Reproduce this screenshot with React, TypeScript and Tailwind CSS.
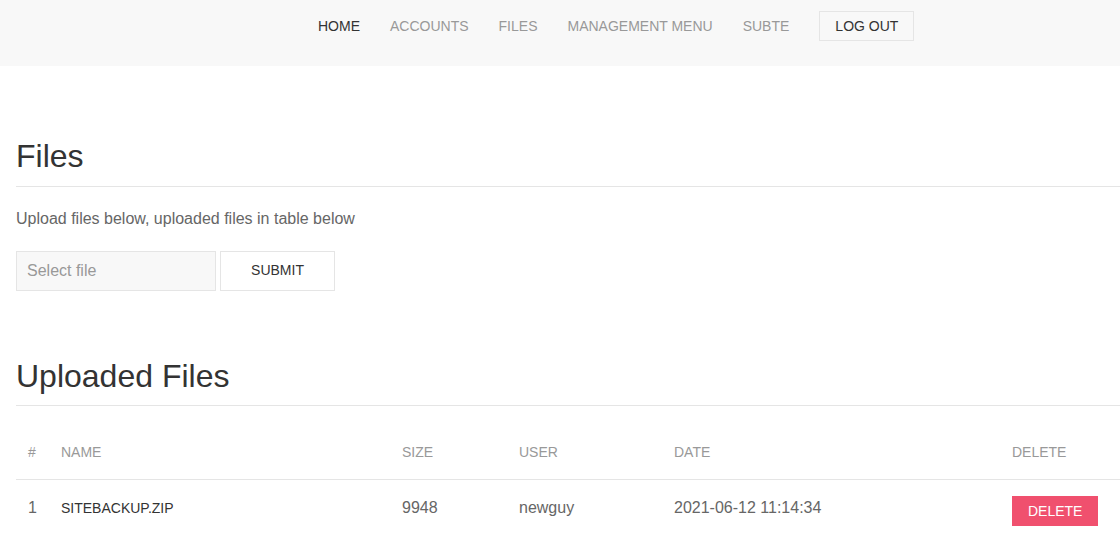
const NAV = ["ACCOUNTS", "FILES", "MANAGEMENT MENU", "SUBTE"];

const FILES = [
  { id: 1, name: "sitebackup.zip", size: "9948", user: "newguy", date: "2021-06-12 11:14:34" },
];

export default function App() {
  return (
    <div className="min-h-screen bg-white font-['Liberation_Sans',Arial,sans-serif] text-[16px] leading-[1.5] text-[#666]">
      {/* Navbar */}
      <nav className="h-[66px] bg-[#f8f8f8]">
        <div className="flex h-[52px] items-center pl-[318px] text-[14px] uppercase">
          <a className="mr-[30px] text-[#333]">Home</a>
          {NAV.map((item) => (
            <a key={item} className="mr-[30px] text-[#999]">
              {item}
            </a>
          ))}
          <button className="box-border h-[30px] border border-[#e5e5e5] bg-transparent px-[15px] text-[14px] uppercase leading-[28px] text-[#333]">
            Log out
          </button>
        </div>
      </nav>

      <main className="pl-4 pt-[70px]">
        {/* Upload */}
        <h2 className="border-b border-[#e5e5e5] pb-[8px] text-[32px] font-normal leading-[1.3] text-[#333]">
          Files
        </h2>
        <p className="mt-5">Upload files below, uploaded files in table below</p>
        <div className="mt-5 flex gap-1">
          <div className="box-border flex h-10 w-[200px] items-center border border-[#e5e5e5] bg-[#f8f8f8] px-[10px] text-[#999]">
            Select file
          </div>
          <button className="box-border h-10 w-[115px] border border-[#e5e5e5] bg-white text-[14px] uppercase text-[#333]">
            Submit
          </button>
        </div>

        {/* Table */}
        <h2 className="mt-[65px] border-b border-[#e5e5e5] pb-[8px] text-[32px] font-normal leading-[1.3] text-[#333]">
          Uploaded Files
        </h2>
        <table className="mt-5 w-full border-collapse">
          <thead>
            <tr className="border-b border-[#e5e5e5] text-left text-[14px] uppercase text-[#999]">
              <th className="w-[33px] px-3 py-4 align-bottom font-normal">#</th>
              <th className="w-[341px] px-3 py-4 align-bottom font-normal">Name</th>
              <th className="w-[117px] px-3 py-4 align-bottom font-normal">Size</th>
              <th className="w-[155px] px-3 py-4 align-bottom font-normal">User</th>
              <th className="w-[338px] px-3 py-4 align-bottom font-normal">Date</th>
              <th className="px-3 py-4 align-bottom font-normal">Delete</th>
            </tr>
          </thead>
          <tbody>
            {FILES.map((f) => (
              <tr key={f.id} className="text-left">
                <td className="px-3 py-4 align-top">{f.id}</td>
                <td className="px-3 py-4 align-top">
                  <span className="text-[14px] uppercase text-[#333]">{f.name}</span>
                </td>
                <td className="px-3 py-4 align-top">{f.size}</td>
                <td className="px-3 py-4 align-top">{f.user}</td>
                <td className="px-3 py-4 align-top">{f.date}</td>
                <td className="px-3 py-4 align-top">
                  <button className="h-[30px] bg-[#f0506e] px-4 text-[14px] uppercase leading-[30px] text-white">
                    Delete
                  </button>
                </td>
              </tr>
            ))}
          </tbody>
        </table>
      </main>
    </div>
  );
}
